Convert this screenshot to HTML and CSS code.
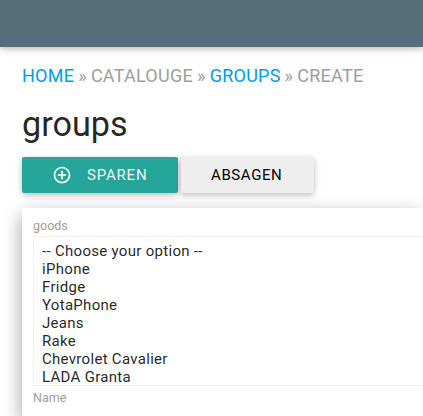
FILE: index.html
```html
<!DOCTYPE html>
<html lang="de">
<head>
<meta charset="utf-8">
<title>groups</title>
<link rel="stylesheet" href="styles.css">
</head>
<body>
<header class="topbar"></header>
<main class="page">
  <nav class="crumbs"><a>HOME</a> » CATALOUGE » <a>GROUPS</a> » CREATE</nav>
  <h1 class="title">groups</h1>
  <div class="actions">
    <button class="btn btn-save"><svg class="icon" viewBox="0 0 24 24"><path fill="currentColor" d="M13 7h-2v4H7v2h4v4h2v-4h4v-2h-4V7zm-1-5C6.480 2 2 6.480 2 12s4.480 10 10 10 10-4.480 10-10S17.520 2 12 2zm0 18c-4.410 0-8-3.590-8-8s3.590-8 8-8 8 3.590 8 8-3.590 8-8 8z"/></svg><span>SPAREN</span></button>
    <button class="btn btn-cancel">ABSAGEN</button>
  </div>
  <section class="card">
    <div class="label">goods</div>
    <ul class="options">
      <li>-- Choose your option --</li>
      <li>iPhone</li>
      <li>Fridge</li>
      <li>YotaPhone</li>
      <li>Jeans</li>
      <li>Rake</li>
      <li>Chevrolet Cavalier</li>
      <li>LADA Granta</li>
    </ul>
    <div class="label">Name</div>
  </section>
</main>
</body>
</html>
```
FILE: styles.css
```css
* { box-sizing: border-box; }
body { margin: 0; height: 416px; display: flex; flex-direction: column; overflow: hidden; background: #fff; color: rgba(0,0,0,.87); font-family: Roboto, sans-serif; }
.topbar { flex: none; height: 47px; background: #546e7a; box-shadow: 0 2px 5px rgba(0,0,0,.16), 0 2px 10px rgba(0,0,0,.12); }
.page { flex: 1; min-height: 0; display: flex; flex-direction: column; padding: 16px 0 0 22px; }
.crumbs { height: 26px; line-height: 26px; font-size: 18px; letter-spacing: .25px; word-spacing: -.7px; color: #9e9e9e; white-space: nowrap; }
.crumbs a { color: #039be5; }
.title { margin: 15px 0 13px; height: 40px; line-height: 40px; font-size: 34.2px; font-weight: 400; }
.actions { display: flex; gap: 3px; }
.btn { display: flex; align-items: center; height: 36px; border: 0; border-radius: 2px; padding: 0 30px; font: 400 15px/36px Roboto, sans-serif; letter-spacing: .6px; box-shadow: 0 2px 5px rgba(0,0,0,.16), 0 2px 10px rgba(0,0,0,.12); }
.btn-save { width: 156px; background: #26a69a; color: #fff; letter-spacing: .8px; }
.btn-save span { opacity: .9; }
.btn-cancel { width: 133px; background: #eee; color: #000; }
.icon { width: 20px; height: 20px; margin-right: 15px; flex: none; }
.card { flex: 1; min-height: 0; margin-top: 15px; padding: 10px 0 0 11px; background: #fff; box-shadow: 0 8px 17px rgba(0,0,0,.2), 0 6px 20px rgba(0,0,0,.19); }
.label { height: 18px; line-height: 16px; font-size: 12.5px; color: #9e9e9e; }
.options { margin: 0; padding: 5px 8px 0; height: 150px; overflow: hidden; list-style: none; border: 1px solid #f2f2f2; border-right: 0; font-size: 15px; line-height: 18px; letter-spacing: .3px; }
.options + .label { height: auto; padding-top: 4px; }
```
